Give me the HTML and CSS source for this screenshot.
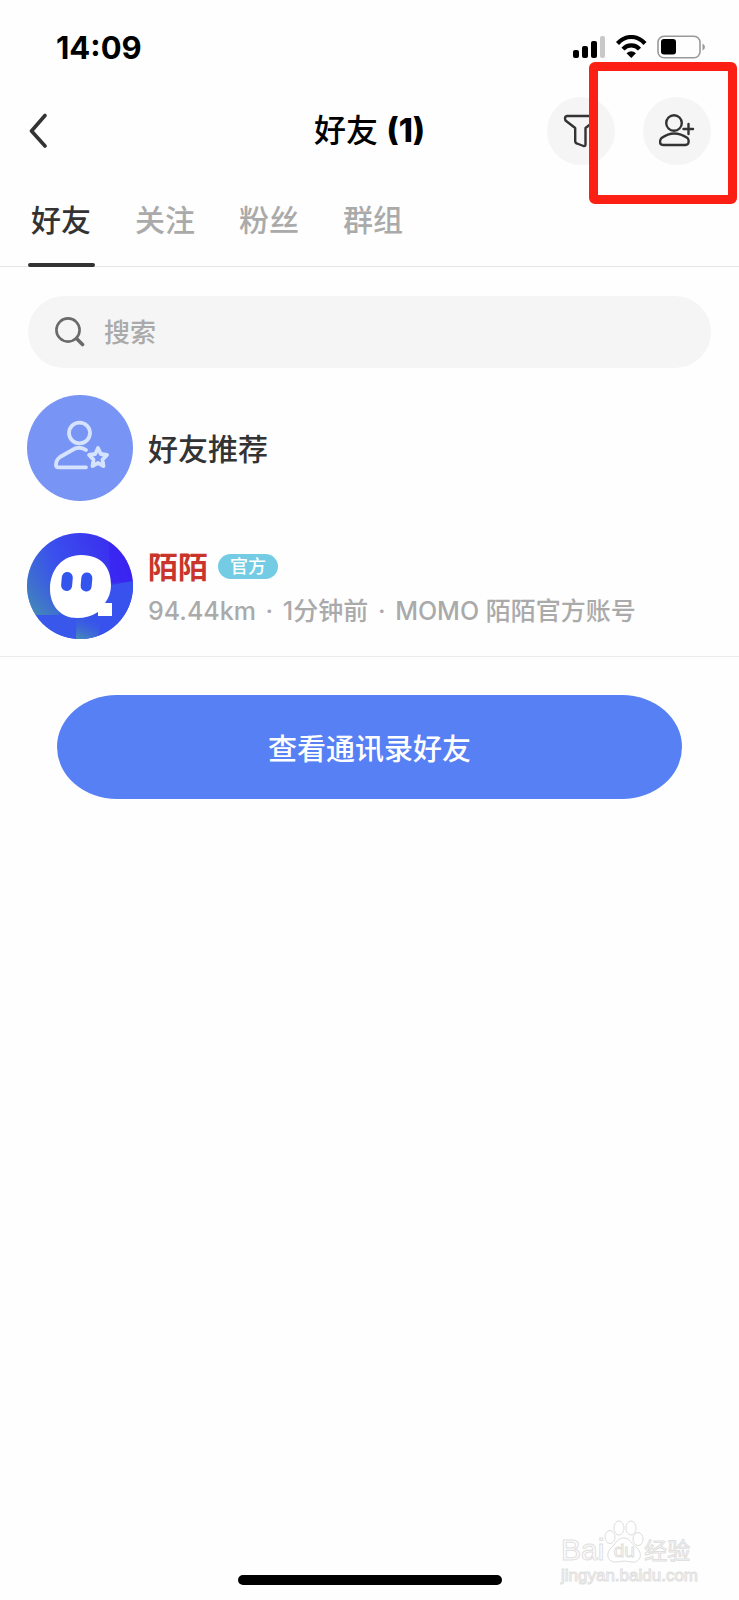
FILE: index.html
```html
<!DOCTYPE html>
<html lang="zh-CN">
<head>
<meta charset="utf-8">
<meta name="viewport" content="width=device-width, initial-scale=1">
<title>好友</title>
<link rel="stylesheet" href="styles.css">
</head>
<body>
<div class="screen">
  <div class="status">
    <span class="time">14:09</span>
    <svg class="status-icons" width="132" height="24" viewBox="0 0 132 24" aria-hidden="true">
      <g><rect x="0" y="15" width="6" height="8" rx="2"/><rect x="9" y="11" width="6" height="12" rx="2"/><rect x="18" y="6" width="6" height="17" rx="2"/><rect x="27" y="1" width="5" height="22" rx="2" fill="#c8c8c8"/></g>
      <g fill="none" stroke="#000" stroke-width="4.2"><path d="M44.5 8.5C52.5 -0.2 64 -0.2 72 8.5"/><path d="M50 14.2C54.5 9.2 62 9.2 66.500 14.2"/></g>
      <path d="M53.500 18.300Q58.300 14.300 63 18.300L58.300 23Z"/>
      <rect x="85" y="1.200" width="42" height="21.500" rx="6" fill="none" stroke="#999" stroke-width="1.600"/>
      <rect x="88" y="4" width="15" height="15.500" rx="3"/>
      <path d="M129.500 8.500Q132 10 132 12T129.500 15.500Z" fill="#999"/>
    </svg>
  </div>

  <header class="nav">
    <button class="back" aria-label="返回">
      <svg width="20" height="36" viewBox="0 0 20 36"><path d="M17 2.500L3.500 18L17 33" fill="none" stroke="#333" stroke-width="3.600" stroke-linecap="round" stroke-linejoin="round"/></svg>
    </button>
    <h1 class="title">好友 <span class="count">(1)</span></h1>
    <div class="actions">
      <button class="round" aria-label="筛选">
        <svg width="36" height="36" viewBox="0 0 36 36" fill="none" stroke="#333" stroke-width="2.400" stroke-linejoin="round"><path d="M4 3H31.500Q33.500 3 33 5.500L31.500 8L22.500 15V31.500Q22.500 33.500 20.500 33L14 30.500Q12.200 30 12.200 28V15L2.500 7.500Q1 3.500 4 3Z"/></svg>
      </button>
      <button class="round marked" aria-label="添加好友">
        <svg width="36" height="36" viewBox="0 0 36 36" fill="none" stroke="#333" stroke-width="2.400" stroke-linecap="round" stroke-linejoin="round"><circle cx="15" cy="10" r="7.800"/><path d="M2.500 25Q9 20.500 15 20.500Q22 20.500 28.500 25Q30 26.500 29.500 29.500Q29 32 26 32H4.500Q1.500 32 1 29.500Q1 26.500 2.500 25Z"/><path d="M24.500 16H34M29.500 11V21"/></svg>
      </button>
    </div>
  </header>

  <nav class="tabs">
    <a class="tab active" href="#friends" aria-current="page">好友</a>
    <a class="tab" href="#following">关注</a>
    <a class="tab" href="#fans">粉丝</a>
    <a class="tab" href="#groups">群组</a>
  </nav>

  <main>
    <label class="search">
      <svg width="30" height="30" viewBox="0 0 30 30" fill="none" stroke="#6a6a6a" stroke-linecap="round"><circle cx="13" cy="13" r="11.600" stroke-width="2.600"/><path d="M21.500 21.500L27.500 27.500" stroke-width="3.600"/></svg>
      <input class="search-input" type="search" placeholder="搜索" aria-label="搜索">
    </label>

    <ul class="list">
      <li class="row">
        <svg class="avatar" viewBox="0 0 106 106" aria-hidden="true">
          <circle cx="53" cy="53" r="53" fill="#7894f5"/>
          <g fill="none" stroke="#d6e3ff" stroke-width="3.800" stroke-linecap="round" stroke-linejoin="round"><ellipse cx="52.500" cy="38" rx="10.500" ry="10.300"/><path d="M59 55Q54 51.500 48 53.500L33 62Q29 65 29 70Q29 72.300 31.500 72.300H59"/><path d="M71 53L73.800 59L80 60L75.500 64.600L76.500 71L71 68L65.500 71L66.500 64.600L62 60L68.200 59Z"/></g>
        </svg>
        <strong class="name">好友推荐</strong>
      </li>
      <li class="row">
        <svg class="avatar" viewBox="0 0 106 106" aria-hidden="true">
          <defs>
            <linearGradient id="sky" x1="0" y1=".6" x2="1" y2=".2"><stop offset="0" stop-color="#3e78c8"/><stop offset=".35" stop-color="#3a50ed"/><stop offset="1" stop-color="#3b25f0"/></linearGradient>
            <linearGradient id="teal" x1="0" y1="1" x2=".5" y2="0"><stop offset="0" stop-color="#4690b0"/><stop offset="1" stop-color="#3a56e8" stop-opacity="0"/></linearGradient>
            <clipPath id="disc"><circle cx="53" cy="53" r="53"/></clipPath>
          </defs>
          <g clip-path="url(#disc)">
            <rect width="106" height="106" fill="url(#sky)"/>
            <path d="M0 30H32V82H0Z" fill="url(#teal)"/>
            <path d="M0 82H50V106H0Z" fill="#3957ea"/>
            <path d="M84 52L106 48V106H50V82Z" fill="#3752ed"/>
            <path d="M50 80L76 84L70 106H49Z" fill="url(#teal)"/>
            <path d="M82 0L83 50L106 48V0Z" fill="#3b1ff2" opacity=".6"/>
          </g>
          <path d="M54 22C76 22 84 36 84 52Q84 62 78 70H85V83H71V79Q62 85 50 85C33 85 23 72 23 56C23 36 36 22 54 22Z" fill="#fff"/>
          <rect x="34.500" y="39" width="11" height="19" rx="5.500" fill="#3454ee" transform="rotate(5 40 48)"/>
          <rect x="54" y="39.500" width="11" height="19" rx="5.500" fill="#3454ee" transform="rotate(5 60 49)"/>
        </svg>
        <div class="info">
          <div class="headline"><strong class="name official">陌陌</strong><span class="badge">官方</span></div>
          <p class="meta">94.44km <span class="dot">·</span> 1分钟前 <span class="dot">·</span> MOMO 陌陌官方账号</p>
        </div>
      </li>
    </ul>

    <div class="cta-area"><button class="cta">查看通讯录好友</button></div>
  </main>

  <footer class="footer">
    <div class="watermark" aria-hidden="true">
      <div class="brand">
        <span class="latin">Bai</span>
        <span class="paw">
          <svg width="40" height="44" viewBox="0 0 40 44" fill="#fff" stroke="#ddd"><ellipse cx="6" cy="17" rx="5" ry="6.500"/><ellipse cx="15" cy="8" rx="5" ry="7"/><ellipse cx="27" cy="8" rx="5" ry="7"/><ellipse cx="34" cy="19" rx="5" ry="6.500"/><path d="M20 18C26 18 27 24 33 28C40 35 35 43 28 42Q20 40 13 42C5 43 1 36 6 29C11 25 13 18 20 18Z"/></svg>
          <span class="du">du</span>
        </span>
        <span class="cn">经验</span>
      </div>
      <div class="url">jingyan.baidu.com</div>
    </div>
    <div class="home"></div>
  </footer>
</div>
</body>
</html>
```

FILE: styles.css
```css
* { box-sizing: border-box; }

body {
  margin: 0;
  background: #fefefe;
  color: #333;
  font-family: Inter, "Noto Sans CJK SC", sans-serif;
}

button { padding: 0; border: 0; background: none; font: inherit; cursor: pointer; }
svg { display: block; flex: none; }

.screen { min-height: 100vh; display: flex; flex-direction: column; }

.status {
  height: 94px;
  padding: 0 34px 0 56px;
  display: flex;
  align-items: center;
  justify-content: space-between;
}
.time { color: #000; font-size: 31px; font-weight: 700; }

.nav {
  height: 74px;
  padding: 0 28px;
  display: grid;
  grid-template-columns: 1fr auto 1fr;
  align-items: center;
}
.back { justify-self: start; }
.title { margin: 0; color: #000; font-size: 32px; font-weight: 500; line-height: 40px; }
.count { font-weight: 800; }
.actions { display: flex; gap: 28px; justify-self: end; }
.round {
  width: 68px;
  height: 68px;
  border-radius: 50%;
  background: #f5f5f5;
  display: grid;
  place-items: center;
}
.marked { position: relative; }
.marked::after {
  content: "";
  position: absolute;
  inset: -35px -26px -39px -54px;
  border: 9px solid #fb2013;
  border-radius: 6px;
}

.tabs {
  height: 99px;
  padding: 0 31px;
  display: flex;
  gap: 44px;
  border-bottom: 1px solid #e6e6e6;
}
.tab {
  padding-top: 28px;
  color: #aaa;
  font-size: 30px;
  font-weight: 500;
  line-height: 48px;
  text-decoration: none;
}
.active { position: relative; color: #333; }
.active::after {
  content: "";
  position: absolute;
  inset: auto -4px -1px -3px;
  height: 4px;
  border-radius: 2px;
  background: #333;
}

.search {
  height: 72px;
  margin: 29px 28px 27px;
  padding: 0 27px;
  display: flex;
  align-items: center;
  gap: 19px;
  border-radius: 36px;
  background: #f5f5f5;
}
.search-input {
  flex: 1;
  min-width: 0;
  padding: 2px 0 0;
  border: 0;
  outline: 0;
  background: none;
  color: #333;
  font: 500 26px/40px Inter, "Noto Sans CJK SC", sans-serif;
}
.search-input::placeholder { color: #aaa; opacity: 1; }

.list {
  margin: 0;
  padding: 0 27px 17px;
  display: grid;
  gap: 32px;
  list-style: none;
  border-bottom: 1px solid #ebebeb;
}
.row { display: flex; align-items: center; gap: 15px; }
.avatar { width: 106px; height: 106px; }
.name { padding-top: 2px; font-size: 30px; font-weight: 500; line-height: 44px; }
.info { padding-top: 4px; }
.headline { display: flex; align-items: center; gap: 10px; }
.official { color: #c9352b; font-weight: 700; }
.badge {
  padding: 0 12px;
  border-radius: 13px;
  background: #73cce3;
  color: #fff;
  font-size: 18px;
  font-weight: 500;
  line-height: 25px;
}
.meta { margin: 0; color: #aaa; font-size: 25px; font-weight: 500; line-height: 44px; }
.dot { margin: 0 3px; }

.cta-area { padding: 38px 57px; }
.cta {
  width: 100%;
  height: 104px;
  border-radius: 60px / 52px;
  background: #5780f4;
  color: #fff;
  font-size: 29px;
  font-weight: 500;
}

.footer { margin-top: auto; padding-bottom: 15px; display: flex; flex-direction: column; }
.watermark {
  position: absolute;
  bottom: 12px;
  right: 41px;
  color: #fff;
  font-family: "Liberation Sans", "Noto Sans CJK SC", sans-serif;
  -webkit-text-stroke: 1px #e0e0e0;
}
.brand { display: flex; align-items: flex-end; }
.latin { font-size: 30px; line-height: 28px; }
.paw { position: relative; }
.du { position: absolute; inset: 20px 0 auto; font-size: 19px; line-height: 22px; text-align: center; }
.cn { font-size: 23px; line-height: 26px; }
.url { font-size: 17px; line-height: 24px; text-align: center; }
.home { width: 264px; height: 10px; align-self: center; border-radius: 5px; background: #000; }
```
